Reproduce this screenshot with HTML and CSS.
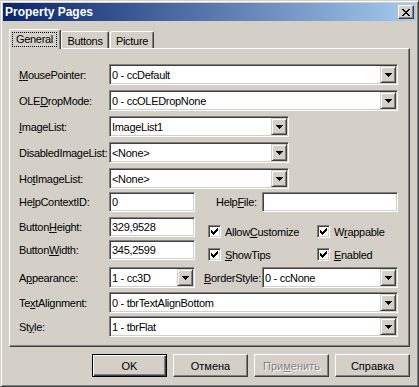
FILE: index.html
```html
<!DOCTYPE html>
<html>
<head>
<meta charset="utf-8">
<title>Property Pages</title>
<link rel="stylesheet" href="styles.css">
</head>
<body>
<div class="window">
  <div class="titlebar">
    <span class="title">Property Pages</span>
    <span class="close"><svg width="8" height="7" viewBox="0 0 8 7" shape-rendering="crispEdges"><path d="M0 0h2v1h-2zM6 0h2v1h-2zM1 1h2v1h-2zM5 1h2v1h-2zM2 2h4v1h-4zM3 3h2v1h-2zM2 4h4v1h-4zM1 5h2v1h-2zM5 5h2v1h-2zM0 6h2v1h-2zM6 6h2v1h-2z" fill="#000"/></svg></span>
  </div>
  <div class="client">
    <div class="tabs">
      <div class="tab selected"><span class="focus">General</span></div>
      <div class="tab t-buttons">Buttons</div>
      <div class="tab t-picture">Picture</div>
    </div>
    <div class="panel">
      <div class="row">
        <span class="lbl"><u>M</u>ousePointer:</span>
        <div class="field combo w-full"><span class="val">0 - ccDefault</span><span class="dd"><svg width="7" height="4" viewBox="0 0 7 4" shape-rendering="crispEdges"><path d="M0 0h7v1h-1v1h-1v1h-1v1h-1v-1h-1v-1h-1v-1h-1z" fill="#000"/></svg></span></div>
      </div>
      <div class="row">
        <span class="lbl">OLE<u>D</u>ropMode:</span>
        <div class="field combo w-full"><span class="val">0 - ccOLEDropNone</span><span class="dd"><svg width="7" height="4" viewBox="0 0 7 4" shape-rendering="crispEdges"><path d="M0 0h7v1h-1v1h-1v1h-1v1h-1v-1h-1v-1h-1v-1h-1z" fill="#000"/></svg></span></div>
      </div>
      <div class="row">
        <span class="lbl"><u>I</u>mageList:</span>
        <div class="field combo w-mid"><span class="val">ImageList1</span><span class="dd"><svg width="7" height="4" viewBox="0 0 7 4" shape-rendering="crispEdges"><path d="M0 0h7v1h-1v1h-1v1h-1v1h-1v-1h-1v-1h-1v-1h-1z" fill="#000"/></svg></span></div>
      </div>
      <div class="row">
        <span class="lbl">DisabledImageList:</span>
        <div class="field combo w-mid"><span class="val">&lt;None&gt;</span><span class="dd"><svg width="7" height="4" viewBox="0 0 7 4" shape-rendering="crispEdges"><path d="M0 0h7v1h-1v1h-1v1h-1v1h-1v-1h-1v-1h-1v-1h-1z" fill="#000"/></svg></span></div>
      </div>
      <div class="row">
        <span class="lbl">Ho<u>t</u>ImageList:</span>
        <div class="field combo w-mid"><span class="val">&lt;None&gt;</span><span class="dd"><svg width="7" height="4" viewBox="0 0 7 4" shape-rendering="crispEdges"><path d="M0 0h7v1h-1v1h-1v1h-1v1h-1v-1h-1v-1h-1v-1h-1z" fill="#000"/></svg></span></div>
      </div>
      <div class="row tb">
        <span class="lbl">He<u>l</u>pContextID:</span>
        <div class="field w-short"><span class="val">0</span></div>
        <span class="lbl2 helpfile">Help<u>F</u>ile:</span>
        <div class="field w-right"><span class="val"></span></div>
      </div>
      <div class="row tb">
        <span class="lbl">Button<u>H</u>eight:</span>
        <div class="field w-short"><span class="val">329,9528</span></div>
        <div class="checks">
          <span class="chk c1"><span class="box"><svg width="7" height="7" viewBox="0 0 7 7" shape-rendering="crispEdges"><path d="M0 2h1v3h-1zM1 3h1v3h-1zM2 4h1v3h-1zM3 3h1v3h-1zM4 2h1v3h-1zM5 1h1v3h-1zM6 0h1v3h-1z" fill="#000"/></svg></span>Allow<u>C</u>ustomize</span>
          <span class="chk"><span class="box"><svg width="7" height="7" viewBox="0 0 7 7" shape-rendering="crispEdges"><path d="M0 2h1v3h-1zM1 3h1v3h-1zM2 4h1v3h-1zM3 3h1v3h-1zM4 2h1v3h-1zM5 1h1v3h-1zM6 0h1v3h-1z" fill="#000"/></svg></span>W<u>r</u>appable</span>
        </div>
      </div>
      <div class="row tb">
        <span class="lbl">Button<u>W</u>idth:</span>
        <div class="field w-short"><span class="val">345,2599</span></div>
        <div class="checks">
          <span class="chk c1"><span class="box"><svg width="7" height="7" viewBox="0 0 7 7" shape-rendering="crispEdges"><path d="M0 2h1v3h-1zM1 3h1v3h-1zM2 4h1v3h-1zM3 3h1v3h-1zM4 2h1v3h-1zM5 1h1v3h-1zM6 0h1v3h-1z" fill="#000"/></svg></span><u>S</u>howTips</span>
          <span class="chk"><span class="box"><svg width="7" height="7" viewBox="0 0 7 7" shape-rendering="crispEdges"><path d="M0 2h1v3h-1zM1 3h1v3h-1zM2 4h1v3h-1zM3 3h1v3h-1zM4 2h1v3h-1zM5 1h1v3h-1zM6 0h1v3h-1z" fill="#000"/></svg></span><u>E</u>nabled</span>
        </div>
      </div>
      <div class="row">
        <span class="lbl">A<u>p</u>pearance:</span>
        <div class="field combo w-short"><span class="val">1 - cc3D</span><span class="dd"><svg width="7" height="4" viewBox="0 0 7 4" shape-rendering="crispEdges"><path d="M0 0h7v1h-1v1h-1v1h-1v1h-1v-1h-1v-1h-1v-1h-1z" fill="#000"/></svg></span></div>
        <span class="lbl2 border"><u>B</u>orderStyle:</span>
        <div class="field combo w-right"><span class="val">0 - ccNone</span><span class="dd"><svg width="7" height="4" viewBox="0 0 7 4" shape-rendering="crispEdges"><path d="M0 0h7v1h-1v1h-1v1h-1v1h-1v-1h-1v-1h-1v-1h-1z" fill="#000"/></svg></span></div>
      </div>
      <div class="row">
        <span class="lbl">Te<u>x</u>tAlignment:</span>
        <div class="field combo w-full"><span class="val">0 - tbrTextAlignBottom</span><span class="dd"><svg width="7" height="4" viewBox="0 0 7 4" shape-rendering="crispEdges"><path d="M0 0h7v1h-1v1h-1v1h-1v1h-1v-1h-1v-1h-1v-1h-1z" fill="#000"/></svg></span></div>
      </div>
      <div class="row">
        <span class="lbl">St<u>y</u>le:</span>
        <div class="field combo w-full"><span class="val">1 - tbrFlat</span><span class="dd"><svg width="7" height="4" viewBox="0 0 7 4" shape-rendering="crispEdges"><path d="M0 0h7v1h-1v1h-1v1h-1v1h-1v-1h-1v-1h-1v-1h-1z" fill="#000"/></svg></span></div>
      </div>
    </div>
    <div class="buttons">
      <span class="btn default">OK</span>
      <span class="btn">Отмена</span>
      <span class="btn disabled">При<u>м</u>енить</span>
      <span class="btn">Справка</span>
    </div>
  </div>
</div>
</body>
</html>
```

FILE: styles.css
```css
* { box-sizing: border-box; }
html, body { margin: 0; padding: 0; background: #D4D0C8; }
body {
  font-family: "Liberation Sans", Arial, sans-serif;
  font-size: 11px;
  color: #000;
  letter-spacing: -0.3px;
}
u { text-decoration: underline; text-underline-offset: 1px; }

.window {
  width: 419px;
  height: 387px;
  border: 1px solid;
  border-color: #D4D0C8 #404040 #404040 #D4D0C8;
  box-shadow: inset 1px 1px #fff, inset -1px -1px #808080;
  padding: 2px;
  background: #D4D0C8;
  display: flex;
  flex-direction: column;
}

.titlebar {
  height: 18px;
  flex: none;
  background: linear-gradient(to right, #0A246A, #A6CAF0);
  display: flex;
  align-items: center;
  justify-content: space-between;
  padding: 0 2px 0 2px;
}
.title {
  color: #fff;
  font-weight: bold;
  font-size: 12px;
  letter-spacing: 0;
}
.close {
  width: 16px;
  height: 14px;
  background: #D4D0C8;
  border: 1px solid;
  border-color: #fff #404040 #404040 #fff;
  box-shadow: inset -1px -1px #808080;
  display: flex;
  align-items: center;
  justify-content: center;
  padding-right: 1px;
}
.close svg { display: block; }

.client {
  flex: 1;
  display: flex;
  flex-direction: column;
  padding: 8px 6px 0 6px;
}

.tabs {
  height: 19px;
  display: flex;
  align-items: flex-end;
}
.tab {
  height: 17px;
  border: 1px solid;
  border-bottom: none;
  border-color: #fff #404040 #404040 #fff;
  border-radius: 2px 2px 0 0;
  box-shadow: inset -1px 0 #808080;
  display: flex;
  align-items: center;
  justify-content: center;
  padding-top: 2px;
  background: #D4D0C8;
}
.tab.selected {
  width: 52px;
  height: 20px;
  margin-bottom: -1px;
  position: relative;
  z-index: 1;
  padding: 2px 3px 2px 2px;
  align-items: stretch;
}
.focus {
  flex: 1;
  border: 1px dotted #000;
  display: flex;
  align-items: center;
  justify-content: center;
  padding-bottom: 1px;
}
.t-buttons { width: 48px; }
.t-picture { width: 44px; margin-left: 1px; }

.panel {
  height: 299px;
  flex: none;
  border: 1px solid;
  border-color: #fff #404040 #404040 #fff;
  box-shadow: inset -1px -1px #808080;
  padding: 15px 0 0 9px;
  display: grid;
  grid-template-rows: 26px 26px 26px 26px 24px 25px 23px 27px 25px 24px 21px;
  align-content: start;
  align-items: start;
}

.row {
  height: 21px;
  display: flex;
  align-items: center;
}
.row.tb { height: 20px; }

.lbl {
  width: 90px;
  flex: none;
  white-space: nowrap;
}
.lbl2 { flex: none; white-space: nowrap; }
.helpfile { width: 46px; margin-left: 21px; }
.border { width: 58px; margin-left: 9px; }

.field {
  height: 100%;
  flex: none;
  border: 1px solid;
  border-color: #808080 #fff #fff #808080;
  box-shadow: inset 1px 1px #404040, inset -1px -1px #D4D0C8;
  background: #fff;
  padding: 1px;
  display: flex;
  align-items: center;
}
.val {
  flex: 1;
  padding-left: 1px;
  white-space: nowrap;
  overflow: hidden;
  align-self: center;
}
.w-full { width: 289px; }
.w-mid { width: 180px; }
.w-short { width: 86px; }
.w-right { width: 136px; }

.dd {
  width: 16px;
  height: 17px;
  flex: none;
  align-self: stretch;
  background: #D4D0C8;
  border: 1px solid;
  border-color: #D4D0C8 #404040 #404040 #D4D0C8;
  box-shadow: inset 1px 1px #fff, inset -1px -1px #808080;
  display: flex;
  align-items: center;
  justify-content: center;
  padding-top: 1px;
}
.dd svg { display: block; }

.checks {
  display: flex;
  align-self: flex-start;
  margin-top: 8px;
  margin-left: 13px;
}
.chk {
  display: flex;
  align-items: center;
  height: 13px;
  white-space: nowrap;
}
.chk.c1 { width: 109px; }
.box {
  width: 13px;
  height: 13px;
  flex: none;
  margin-right: 4px;
  border: 1px solid;
  border-color: #808080 #fff #fff #808080;
  box-shadow: inset 1px 1px #404040, inset -1px -1px #D4D0C8;
  background: #fff;
  display: flex;
  align-items: center;
  justify-content: center;
}
.box svg { display: block; }

.buttons {
  display: flex;
  justify-content: flex-end;
  gap: 6px;
  margin-top: 7px;
}
.btn {
  width: 75px;
  height: 23px;
  display: flex;
  align-items: center;
  justify-content: center;
  background: #D4D0C8;
  border: 1px solid;
  border-color: #fff #404040 #404040 #fff;
  box-shadow: inset -1px -1px #808080;
  letter-spacing: 0;
}
.btn.default {
  border: 1px solid #000;
  box-shadow: inset 1px 1px #fff, inset -1px -1px #404040, inset -2px -2px #808080;
}
.btn.disabled {
  color: #808080;
  text-shadow: 1px 1px #fff;
}
```
